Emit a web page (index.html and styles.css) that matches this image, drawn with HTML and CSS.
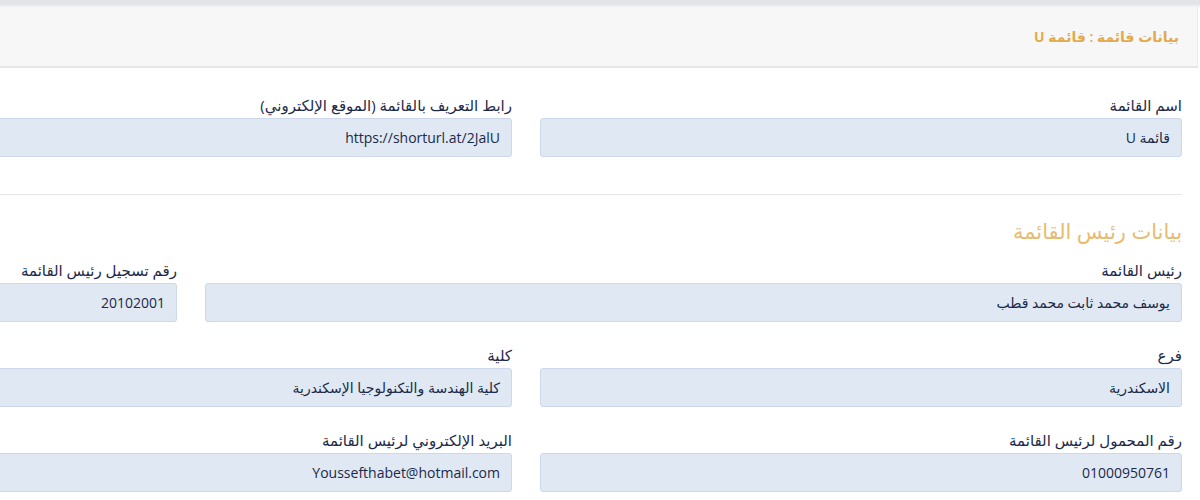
FILE: index.html
```html
<!DOCTYPE html>
<html lang="ar" dir="rtl">
  <head>
    <title>بيانات قائمة</title>
    <meta charset="utf-8" />
    <link rel="stylesheet" href="styles.css">
  </head>
  <body>
    <div class="topbar"></div>

    <div class="panel-head">
      <h3>بيانات قائمة : <strong>قائمة U</strong></h3>
    </div>

    <div class="form">
      <div class="row">
        <div class="col-6">
          <label>اسم القائمة</label>
          <div class="field">قائمة U</div>
        </div>
        <div class="col-6">
          <label>رابط التعريف بالقائمة (الموقع الإلكتروني)</label>
          <div class="field">https://shorturl.at/2JalU</div>
        </div>
      </div>

      <hr />

      <h4 class="section">بيانات رئيس القائمة</h4>

      <div class="row">
        <div class="col-9">
          <label>رئيس القائمة</label>
          <div class="field">يوسف محمد ثابت محمد قطب</div>
        </div>
        <div class="col-3">
          <label>رقم تسجيل رئيس القائمة</label>
          <div class="field">20102001</div>
        </div>
      </div>

      <div class="row">
        <div class="col-6">
          <label>فرع</label>
          <div class="field">الاسكندرية</div>
        </div>
        <div class="col-6">
          <label>كلية</label>
          <div class="field">كلية الهندسة والتكنولوجيا الإسكندرية</div>
        </div>
      </div>

      <div class="row">
        <div class="col-6">
          <label>رقم المحمول لرئيس القائمة</label>
          <div class="field">01000950761</div>
        </div>
        <div class="col-6">
          <label>البريد الإلكتروني لرئيس القائمة</label>
          <div class="field">Youssefthabet@hotmail.com</div>
        </div>
      </div>
    </div>
  </body>
</html>
```

FILE: styles.css
```css
html,
body {
  overflow: hidden;
}
body {
  margin: 0;
  direction: rtl;
  font-family: "Open Sans", "DejaVu Sans", sans-serif;
  color: #1c2a4a;
  background: #fff;
}
.topbar {
  height: 5px;
  background: #e3e4e7;
  border-bottom: 2px solid #eeeff1;
}
.panel-head {
  width: 1400px;
  margin-right: 2px;
  height: 59px;
  background: #f7f7f7;
  border-bottom: 2px solid #e6e6e6;
  border-right: 1px solid #e8e8e8;
  display: flex;
  align-items: center;
  padding-right: 18px;
}
.panel-head h3 {
  margin: 0;
  font-size: 14px;
  font-weight: 600;
  color: #e2aa4c;
}
.panel-head strong {
  font-weight: 700;
}
.form {
  width: 1312px;
  margin-right: 18px;
  padding-top: 27px;
}
.row {
  display: grid;
  grid-template-columns: repeat(12, 1fr);
  column-gap: 28px;
  margin-bottom: 23px;
}
.col-6 {
  grid-column: span 6;
}
.col-9 {
  grid-column: span 9;
}
.col-3 {
  grid-column: span 3;
}
label {
  display: block;
  font-size: 15px;
  line-height: 20px;
  margin-bottom: 3px;
}
.field {
  height: 37px;
  line-height: 37px;
  background: #dfe8f3;
  border: 1px solid #cbd9ea;
  border-radius: 3px;
  padding: 0 11px;
  font-size: 14px;
  white-space: nowrap;
}
hr {
  border: 0;
  border-top: 1px solid #e6e6e6;
  margin: 37px 0 21px;
}
.section {
  margin: 0 0 14px;
  font-size: 21px;
  font-weight: 400;
  color: #e8bc70;
  line-height: 30px;
}
```
